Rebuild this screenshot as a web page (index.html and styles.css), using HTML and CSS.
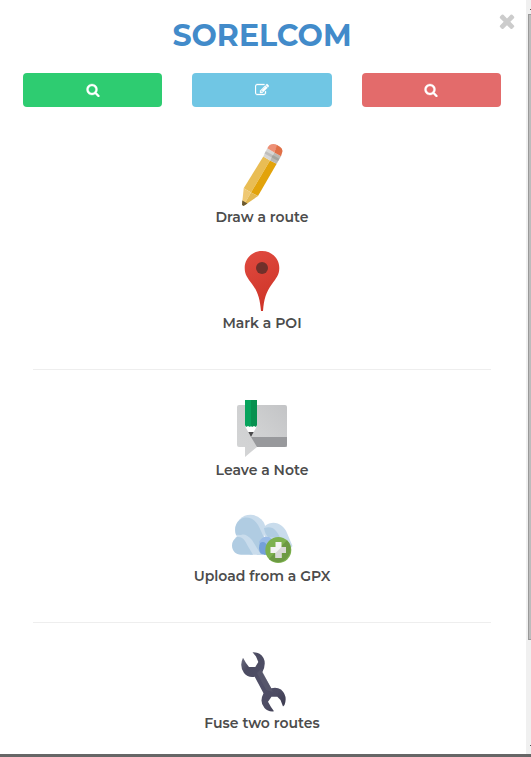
FILE: index.html
```html
<!DOCTYPE html>
<html lang="en">
<head>
<meta charset="utf-8">
<meta name="viewport" content="width=device-width, initial-scale=1">
<title>Sorelcom</title>
<link rel="stylesheet" href="styles.css">
</head>
<body>
<svg class="defs" aria-hidden="true">
  <symbol id="search" viewBox="0 0 1792 1792"><path d="M1216 832q0-185-131.500-316.500t-316.500-131.500-316.500 131.500-131.500 316.500 131.500 316.500 316.500 131.500 316.500-131.500 131.500-316.500zm512 832q0 52-38 90t-90 38q-54 0-90-38l-343-342q-179 124-399 124-143 0-273.500-55.500t-225-150-150-225-55.500-273.500 55.500-273.500 150-225 225-150 273.500-55.500 273.500 55.500 225 150 150 225 55.500 273.500q0 220-124 399l343 343q37 37 37 90z"/></symbol>
</svg>
<div class="screen">
  <main class="panel">
    <button class="close" type="button" aria-label="Close">
      <svg viewBox="0 0 1792 1792" aria-hidden="true"><path d="M1490 1322q0 40-28 68l-136 136q-28 28-68 28t-68-28l-294-294-294 294q-28 28-68 28t-68-28l-136-136q-28-28-28-68t28-68l294-294-294-294q-28-28-28-68t28-68l136-136q28-28 68-28t68 28l294 294 294-294q28-28 68-28t68 28l136 136q28 28 28 68t-28 68l-294 294 294 294q28 28 28 68z"/></svg>
    </button>
    <h1 class="brand"><a href="#">SORELCOM</a></h1>
    <div class="tabs">
      <button class="tab green" type="button" aria-label="Search"><svg aria-hidden="true"><use href="#search"/></svg></button>
      <button class="tab blue" type="button" aria-label="Edit"><svg viewBox="0 0 1792 1792" aria-hidden="true"><path d="M888 1184l116-116-152-152-116 116v56h96v96h56zm440-720q-16-16-33 1l-350 350q-17 17-1 33t33-1l350-350q17-17 1-33zm80 594v190q0 119-84.500 203.500t-203.500 84.500h-832q-119 0-203.500-84.500t-84.500-203.500v-832q0-119 84.500-203.500t203.500-84.500h832q63 0 117 25 15 7 18 23 3 17-9 29l-49 49q-14 14-32 8-23-6-45-6h-832q-66 0-113 47t-47 113v832q0 66 47 113t113 47h832q66 0 113-47t47-113v-126q0-13 9-22l64-64q15-15 35-7t20 29zm-96-738l288 288-672 672h-288v-288zm444 132l-92 92-288-288 92-92q28-28 68-28t68 28l152 152q28 28 28 68t-28 68z"/></svg></button>
      <button class="tab red" type="button" aria-label="Find"><svg aria-hidden="true"><use href="#search"/></svg></button>
    </div>
    <section class="group">
      <a class="action" href="#">
        <svg viewBox="0 0 64 64" aria-hidden="true">
          <path fill="#e9bd54" d="M33.300 13.500 40 17.500 21 49.500 13.700 45.300Z"/>
          <path fill="#e2a30b" d="M40 17.500 46.700 20.700 28 53 21 49.500Z"/>
          <path fill="#efc873" d="M13.700 45.300 21 49.500 13.300 62.700 12 61.500Z"/>
          <path fill="#e3b851" d="M21 49.500 28 53 15 62 13.300 62.700Z"/>
          <path fill="#6b5931" d="M12.300 57.500 17.500 60.500 13.500 63 12 62Z"/>
          <path fill="#d7d6d4" d="M37.300 5.300 44.300 9.500 40 17.500 33.300 13.500Z"/>
          <path fill="#b9b8b3" d="M44.300 9.500 51 13.300 46.700 20.700 40 17.500Z"/>
          <path fill="#bfbebc" d="M35.800 8.200 42.700 12 41.400 14.300 34.500 10.500Z"/>
          <path fill="#a4a49e" d="M42.700 12 49.400 15.700 48 18 41.400 14.300Z"/>
          <path fill="#ed9076" d="M37.300 5.300Q39.500 0 45.500 1.300L47.500 2.300 44.300 9.500Z"/>
          <path fill="#e07047" d="M47 2Q54 5 52 10L51 13.300 44.300 9.500Z"/>
        </svg>
        <span>Draw a route</span>
      </a>
      <a class="action" href="#">
        <svg viewBox="0 0 64 64" aria-hidden="true">
          <defs><linearGradient id="pin" x1="0" y1="0" x2="0.300" y2="1"><stop offset="0" stop-color="#e04b40"/><stop offset="1" stop-color="#cf3529"/></linearGradient></defs>
          <path fill="url(#pin)" d="M32 2C22 2 14.700 9.700 14.700 19C14.700 26 18 29.500 22 35C28 43 30 50 31 62H33C34 50 36 43 42 35C46 29.500 49.300 26 49.300 19C49.300 9.700 42 2 32 2Z"/>
          <circle cx="32" cy="19" r="6" fill="#70302a"/>
        </svg>
        <span>Mark a POI</span>
      </a>
    </section>
    <hr>
    <section class="group">
      <a class="action" href="#">
        <svg viewBox="0 0 64 64" aria-hidden="true">
          <defs><linearGradient id="note" x1="0" y1="1" x2="1" y2="0"><stop offset="0" stop-color="#d4d5d6"/><stop offset="0.500" stop-color="#cfd0d1"/><stop offset="1" stop-color="#c3c4c6"/></linearGradient></defs>
          <path fill="url(#note)" d="M9 9H55Q57 9 57 11V51H27L15 61V51H9Q7 51 7 49V11Q7 9 9 9Z"/>
          <path fill="#98999c" d="M21 41H57V49Q57 51 55 51H27Z"/>
          <path fill="#fff" d="M15 30H27L21 41Z"/>
          <path fill="#4a4a4b" d="M18.300 36H23.700L21 41Z"/>
          <path fill="#07a35c" d="M15 4H21V30L20 31 18 30 16 31 15 29Z"/>
          <path fill="#079150" d="M21 4H27V29L26 31 24 30 22 31 21 30Z"/>
        </svg>
        <span>Leave a Note</span>
      </a>
      <a class="action" href="#">
        <svg viewBox="0 0 64 64" aria-hidden="true">
          <circle cx="20.500" cy="28" r="15.200" fill="#c9dcec"/>
          <path fill="#c9dcec" d="M35 24C43 17 54 22 57 31L62.500 44 56 52H36L12 50V35H35Z"/>
          <path fill="#b0cce2" d="M6 33C3 24 8 17 15 15.500C24 15 28 22 31 29L35 38C32 42 31 47 33 52.700H27L18 38Q12 32 6 33Z"/>
          <path fill="#b0cce2" d="M34 26C43 23 47 29 50 35.500H39Q35 33 34 26Z"/>
          <path fill="#c9dcec" d="M5 36Q14 28 22 38L31 52.700H20L12 39Z"/>
          <path fill="#b0cce2" d="M11 52.700C6 52.700 2 49 2 43.500Q2 38 7 35C14 34 16 41 19 46L23 52.700Z"/>
          <path fill="#9bbce7" d="M29 40Q32 34 39 35L45 39 40 52.700H34Z"/>
          <path fill="#74a0d9" d="M30 41Q35 38 38 45V52.700H34Q29 52 29 46 29 43 30 41Z"/>
          <circle cx="48.300" cy="48" r="13" fill="#7db14e"/>
          <path fill="#6c9943" d="M57 38.300A13 13 0 0 1 39 57Z"/>
          <path fill="#f3f3f2" d="M45.500 40H51.500V45H56V51H51.500V56H45.500V51H40.500V45H45.500Z"/>
          <path fill="#d8d8d6" d="M51.500 45H56V51H51.500V56H45.500V51Z"/>
        </svg>
        <span>Upload from a GPX</span>
      </a>
    </section>
    <hr>
    <section class="group">
      <a class="action" href="#">
        <svg viewBox="0 0 64 64" aria-hidden="true">
          <defs><linearGradient id="steel" x1="0" y1="0" x2="1" y2="1"><stop offset="0" stop-color="#77788a"/><stop offset="0.200" stop-color="#4b4b61"/><stop offset="0.500" stop-color="#504f67"/><stop offset="0.750" stop-color="#4d4c63"/><stop offset="1" stop-color="#37364a"/></linearGradient></defs>
          <path fill="url(#steel)" d="M22.500 3.300Q30 3 33.500 9Q36.500 15 32.300 23.300L41.300 39.300Q47 38 51 40.500Q58 47 54.500 56L53 57.500 50.500 51 47.300 47.700H41.500L38 52.700 41 58 44 62.300Q38 63 34.500 59Q29 53 33.500 44.300L24.700 27.700Q18 29 14 24Q9 17 13 8.700L16 14 19 18H25.300L28.300 13 26 7.500Z"/>
          <path fill="#5d5d70" d="M31 20 41 39 43 43 36 41 27 24Z" opacity="0.500"/>
        </svg>
        <span>Fuse two routes</span>
      </a>
    </section>
  </main>
  <div class="track" aria-hidden="true"><i class="tick"></i><div class="thumb"></div><i class="tick"></i></div>
</div>
</body>
</html>
```

FILE: styles.css
```css
* { box-sizing: border-box; }

body {
  margin: 0;
  background: #fff;
  color: #444;
  font: 600 14px/20px Montserrat, Inter, sans-serif;
}

.defs { display: none; }

.screen {
  display: flex;
  min-height: 100vh;
  border-bottom: 3px solid #666;
}

.panel {
  position: relative;
  flex: 1;
  padding: 16px 25px 0 23px;
}

.brand {
  margin: 0;
  font-size: 30px;
  line-height: 40px;
  font-weight: 700;
  text-align: center;
}

.brand a {
  color: #428bca;
  text-decoration: none;
}

.close {
  position: absolute;
  top: 10px;
  right: 8px;
  padding: 0;
  border: 0;
  background: none;
}

.close svg {
  display: block;
  width: 22px;
  height: 22px;
  fill: #ccc;
}

.tabs {
  display: grid;
  grid-template-columns: repeat(3, 1fr);
  gap: 30px;
  margin: 17px 0 36px;
}

.tab {
  display: flex;
  align-items: center;
  justify-content: center;
  height: 34px;
  padding: 0;
  border: 0;
  border-radius: 4px;
}

.tab svg {
  width: 14px;
  height: 14px;
  fill: #fff;
  stroke: #fff;
  stroke-width: 40px;
}

.green { background: #2ecc71; }
.blue { background: #70c6e4; }
.red { background: #e36b6b; }

.group {
  display: flex;
  flex-direction: column;
  align-items: center;
  gap: 22px;
}

.action {
  display: flex;
  flex-direction: column;
  align-items: center;
  color: #4c4c4c;
  text-decoration: none;
}

.action svg {
  width: 64px;
  height: 64px;
}

hr {
  width: calc(100% - 20px);
  height: 1px;
  margin: 36px 10px 26px;
  border: 0;
  background: #eee;
}

.track {
  display: flex;
  flex-direction: column;
  width: 5px;
  padding: 9px 0 8px;
  background: #f0f0f0;
}

.tick {
  align-self: flex-end;
  width: 1px;
  height: 1px;
  background: #555;
}

.thumb {
  height: 85%;
  margin: 4px 0 auto 2px;
  border: 1px solid #999;
  border-right: 0;
  background: #bcbcbc;
}
```
